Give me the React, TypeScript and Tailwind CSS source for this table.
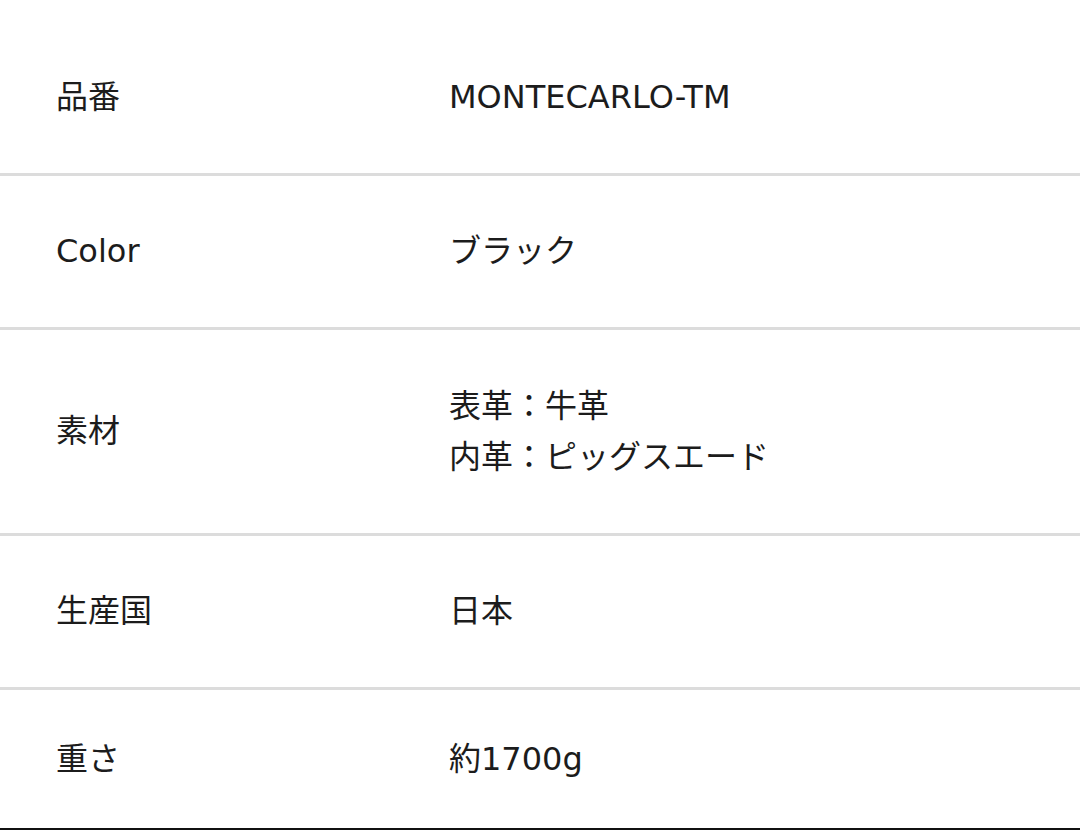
import React from "react";

type Spec = { label: string; value: string[]; tall?: boolean };

const specs: Spec[] = [
  { label: "品番", value: ["MONTECARLO-TM"] },
  { label: "Color", value: ["ブラック"] },
  { label: "素材", value: ["表革：牛革", "内革：ピッグスエード"], tall: true },
  { label: "生産国", value: ["日本"] },
  { label: "重さ", value: ["約1700g"] },
];

const SpecTable: React.FC = () => {
  return (
    <div
      className="w-[1080px] h-[830px] bg-white flex flex-col pt-[22px] text-[#1c1c1c] text-[32px] overflow-hidden"
      style={{ fontFamily: '"DejaVu Sans", "Noto Sans CJK JP", sans-serif' }}
    >
      {specs.map((row, i) => {
        const last = i === specs.length - 1;
        return (
          <div
            key={row.label}
            className={
              last
                ? "flex-1 grid grid-cols-[393px_1fr] items-center pl-[56px] border-b-2 border-[#111]"
                : row.tall
                ? "h-[206px] shrink-0 grid grid-cols-[393px_1fr] items-center pl-[56px] border-b-[3px] border-[#dcdcdc]"
                : "h-[154px] shrink-0 grid grid-cols-[393px_1fr] items-center pl-[56px] border-b-[3px] border-[#dcdcdc]"
            }
          >
            <div className="leading-[51px]">{row.label}</div>
            <div className="leading-[51px] flex flex-col">
              {row.value.map((v) => (
                <span key={v}>{v}</span>
              ))}
            </div>
          </div>
        );
      })}
    </div>
  );
};

export default function App() {
  return <SpecTable />;
}
